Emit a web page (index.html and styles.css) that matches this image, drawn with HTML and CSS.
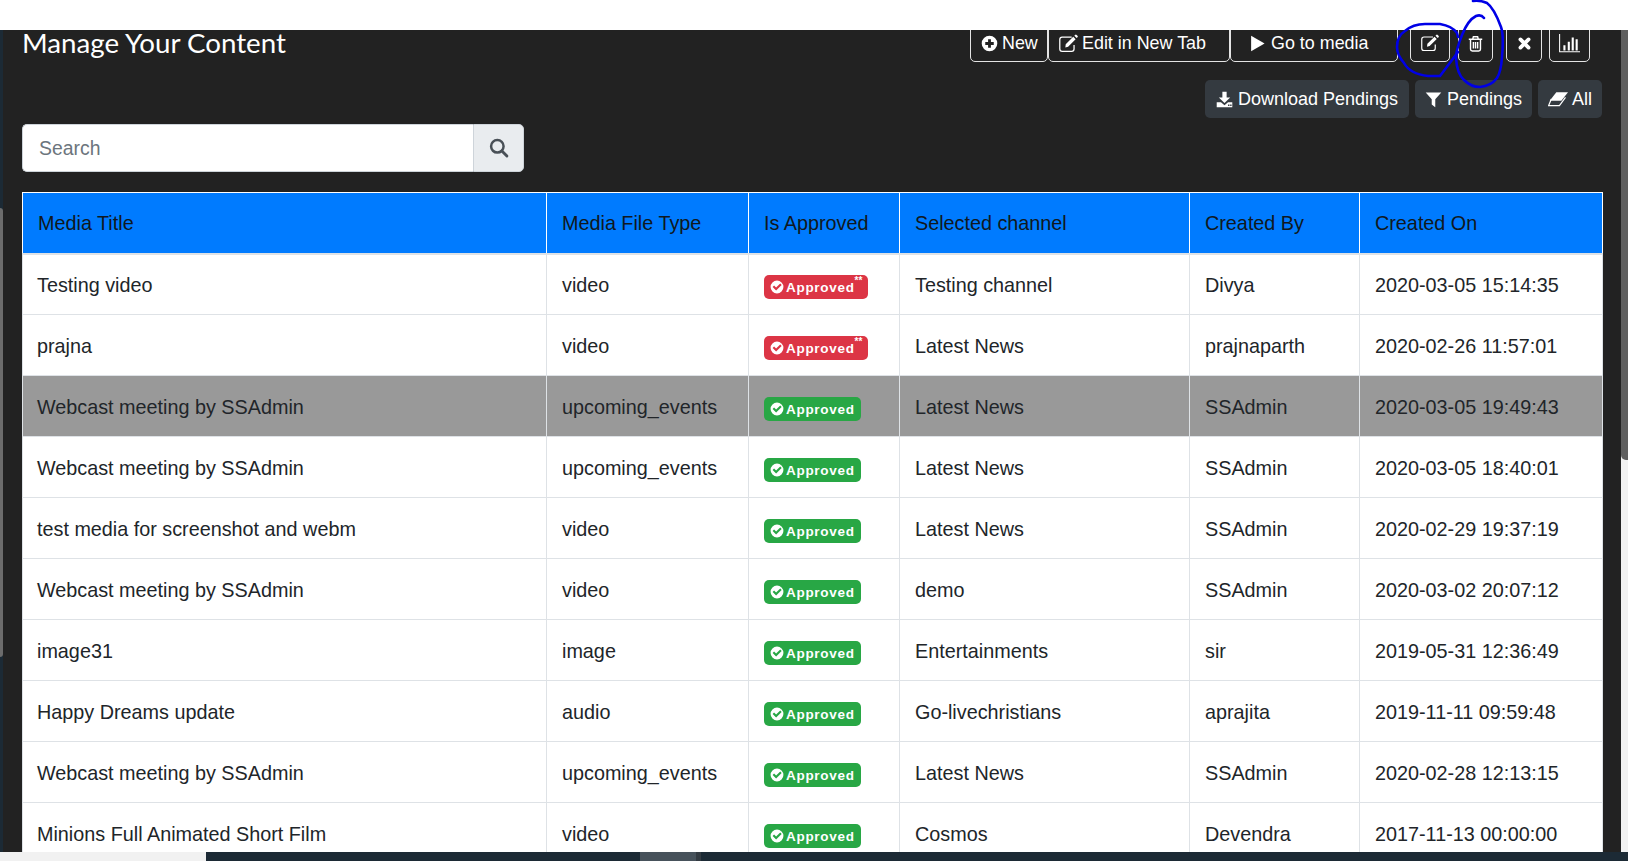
FILE: index.html
```html
<!DOCTYPE html>
<html lang="en">
<head>
<meta charset="utf-8">
<title>Manage Your Content</title>
<link rel="stylesheet" href="styles.css">
</head>
<body>
<svg class="defs" aria-hidden="true">
  <symbol id="i-plus" viewBox="0 0 24 24"><path fill="currentColor" fill-rule="evenodd" d="M12 1a11 11 0 1 0 0 22 11 11 0 0 0 0-22zM10 6h4v4h4v4h-4v4h-4v-4H6v-4h4z"/></symbol>
  <symbol id="i-edit" viewBox="0 0 24 24"><path fill="none" stroke="currentColor" stroke-width="1.600" d="M19 14v5a3 3 0 0 1-3 3H4a3 3 0 0 1-3-3V7a3 3 0 0 1 3-3h12"/><path fill="currentColor" d="M8.500 13 18 3.500l3 3L11.500 16 8 17zM19.300 2.200l1-1q1-1 2 0l1 1q1 1 0 2l-1 1z"/></symbol>
  <symbol id="i-play" viewBox="0 0 24 24"><path fill="currentColor" d="M3 1l19 11L3 23z"/></symbol>
  <symbol id="i-trash" viewBox="0 0 24 24"><path fill="none" stroke="currentColor" stroke-width="2" d="M2.500 6h19M8 6l1-3.500h6L16 6M5 6v14a2.500 2.500 0 0 0 2.500 2.500h9A2.500 2.500 0 0 0 19 20V6M9 10v9M12 10v9M15 10v9"/></symbol>
  <symbol id="i-times" viewBox="0 0 24 24"><path fill="none" stroke="currentColor" stroke-width="6" stroke-linecap="round" d="M5.500 5.500l13 13M18.500 5.500l-13 13"/></symbol>
  <symbol id="i-chart" viewBox="0 0 24 24"><path fill="none" stroke="currentColor" stroke-width="1.200" d="M.7 1v20.500H24"/><path fill="currentColor" d="M5 14h2.400v6H5zM10 10h2.400v10H10zM14.500 5h2.400v15h-2.400zM19 7h2.400v13H19z"/></symbol>
  <symbol id="i-download" viewBox="0 0 24 24"><path fill="currentColor" fill-rule="evenodd" d="M9 1h6v8h5l-8 8-8-8h5zM1 16h6l5 4 5-4h6v7H1zM17 19v2h2v-2zM20 19v2h2v-2z"/></symbol>
  <symbol id="i-filter" viewBox="0 0 24 24"><path fill="currentColor" d="M1 2h22l-8.500 9.500V23l-5-4v-7.500z"/></symbol>
  <symbol id="i-eraser" viewBox="0 0 24 24"><path fill="currentColor" d="M10 4h14l-8 10H2z"/><path fill="none" stroke="currentColor" stroke-width="1.400" d="M4 12l-3.300 8h13L21 10"/></symbol>
  <symbol id="i-search" viewBox="0 0 24 24"><circle cx="10" cy="10" r="7.500" fill="none" stroke="currentColor" stroke-width="3"/><path fill="none" stroke="currentColor" stroke-width="3.500" stroke-linecap="round" d="M15.500 15.500l6 6"/></symbol>
  <symbol id="i-check" viewBox="0 0 24 24"><path fill="currentColor" fill-rule="evenodd" d="M12 1a11 11 0 1 0 0 22 11 11 0 0 0 0-22zM10.500 18l-6-6 2.500-2.500 3.500 3.500 7-7 2.500 2.500z"/></symbol>
</svg>

<div class="topbar"></div>

<div class="window">
  <div class="edge"><div class="edge-thumb"></div></div>

  <main class="content">
    <header class="head">
      <h1 class="title">Manage Your Content</h1>
      <div class="actions">
        <div class="action-row outline-row">
          <a class="btn outline w-new"><svg class="ico"><use href="#i-plus"/></svg>New</a>
          <a class="btn outline w-edit"><svg class="ico ico-edit"><use href="#i-edit"/></svg>Edit in New Tab</a>
          <a class="btn outline w-go"><svg class="ico"><use href="#i-play"/></svg>Go to media</a>
          <a class="btn outline w-ic1 sp-a"><svg class="ico ico-edit"><use href="#i-edit"/></svg></a>
          <a class="btn outline w-ic2 sp-b"><svg class="ico"><use href="#i-trash"/></svg></a>
          <a class="btn outline w-ic3 sp-c"><svg class="ico ico-sm"><use href="#i-times"/></svg></a>
          <a class="btn outline w-ic4 sp-d"><svg class="ico"><use href="#i-chart"/></svg></a>
        </div>
        <div class="action-row solid-row">
          <a class="btn solid w-dl"><svg class="ico"><use href="#i-download"/></svg>Download Pendings</a>
          <a class="btn solid w-pend"><svg class="ico"><use href="#i-filter"/></svg>Pendings</a>
          <a class="btn solid w-all"><svg class="ico ico-eraser"><use href="#i-eraser"/></svg>All</a>
        </div>
      </div>
    </header>

    <form class="search">
      <input class="search-input" type="text" placeholder="Search">
      <span class="search-addon"><svg class="ico-search"><use href="#i-search"/></svg></span>
    </form>

    <table class="grid">
      <colgroup>
        <col class="c1"><col class="c2"><col class="c3"><col class="c4"><col class="c5"><col class="c6">
      </colgroup>
      <thead>
        <tr><th>Media Title</th><th>Media File Type</th><th>Is Approved</th><th>Selected channel</th><th>Created By</th><th>Created On</th></tr>
      </thead>
      <tbody>
        <tr><td>Testing video</td><td>video</td><td><span class="badge red"><svg class="ico-check"><use href="#i-check"/></svg>Approved<sup class="stars">**</sup></span></td><td>Testing channel</td><td>Divya</td><td>2020-03-05 15:14:35</td></tr>
        <tr><td>prajna</td><td>video</td><td><span class="badge red"><svg class="ico-check"><use href="#i-check"/></svg>Approved<sup class="stars">**</sup></span></td><td>Latest News</td><td>prajnaparth</td><td>2020-02-26 11:57:01</td></tr>
        <tr class="active"><td>Webcast meeting by SSAdmin</td><td>upcoming_events</td><td><span class="badge green"><svg class="ico-check"><use href="#i-check"/></svg>Approved</span></td><td>Latest News</td><td>SSAdmin</td><td>2020-03-05 19:49:43</td></tr>
        <tr><td>Webcast meeting by SSAdmin</td><td>upcoming_events</td><td><span class="badge green"><svg class="ico-check"><use href="#i-check"/></svg>Approved</span></td><td>Latest News</td><td>SSAdmin</td><td>2020-03-05 18:40:01</td></tr>
        <tr><td>test media for screenshot and webm</td><td>video</td><td><span class="badge green"><svg class="ico-check"><use href="#i-check"/></svg>Approved</span></td><td>Latest News</td><td>SSAdmin</td><td>2020-02-29 19:37:19</td></tr>
        <tr><td>Webcast meeting by SSAdmin</td><td>video</td><td><span class="badge green"><svg class="ico-check"><use href="#i-check"/></svg>Approved</span></td><td>demo</td><td>SSAdmin</td><td>2020-03-02 20:07:12</td></tr>
        <tr><td>image31</td><td>image</td><td><span class="badge green"><svg class="ico-check"><use href="#i-check"/></svg>Approved</span></td><td>Entertainments</td><td>sir</td><td>2019-05-31 12:36:49</td></tr>
        <tr><td>Happy Dreams update</td><td>audio</td><td><span class="badge green"><svg class="ico-check"><use href="#i-check"/></svg>Approved</span></td><td>Go-livechristians</td><td>aprajita</td><td>2019-11-11 09:59:48</td></tr>
        <tr><td>Webcast meeting by SSAdmin</td><td>upcoming_events</td><td><span class="badge green"><svg class="ico-check"><use href="#i-check"/></svg>Approved</span></td><td>Latest News</td><td>SSAdmin</td><td>2020-02-28 12:13:15</td></tr>
        <tr><td>Minions Full Animated Short Film</td><td>video</td><td><span class="badge green"><svg class="ico-check"><use href="#i-check"/></svg>Approved</span></td><td>Cosmos</td><td>Devendra</td><td>2017-11-13 00:00:00</td></tr>
      </tbody>
    </table>
  </main>

  <div class="vscroll"><div class="vscroll-thumb"></div></div>
</div>

<footer class="taskbar">
  <div class="hscroll-track"></div>
  <div class="task-left"></div>
  <div class="task-thumb"></div>
  <div class="task-thumb-end"></div>
  <div class="task-right"><span class="clock">10:22</span></div>
</footer>

<svg class="scribble" viewBox="0 0 1628 861" aria-hidden="true">
  <path d="M1458 52L1440 76L1428 76Q1410 74 1404 63Q1397 55 1397 47Q1397 36 1405 31Q1413 24 1425 24L1440 24Q1452 26 1457 33L1458 37"/>
  <path d="M1484 18Q1481 14 1476 16Q1468 20 1462 35Q1456 50 1456 58Q1457 74 1464 80Q1471 87 1480 87Q1491 86 1497 78Q1501 72 1502 57Q1504 35 1501 27Q1494 8 1487 3Q1480 0 1473 1"/>
</svg>
</body>
</html>
```

FILE: styles.css
```css
* { box-sizing: border-box; }

html, body {
  margin: 0;
  height: 100%;
  overflow: hidden;
}

body {
  display: flex;
  flex-direction: column;
  height: 861px;
  background: #222;
  font-family: "Liberation Sans", Arial, sans-serif;
  color: #212529;
}

.defs { display: none; }

.topbar {
  flex: 0 0 30px;
  background: #fff;
}

.window {
  flex: 1 1 auto;
  min-height: 0;
  display: flex;
  background: #222;
  overflow: hidden;
}

.edge {
  flex: 0 0 3px;
  background: #1c2a35;
  padding-top: 178px;
}

.edge-thumb {
  height: 449px;
  background: #6c6c6c;
  border-radius: 0 3px 3px 0;
}

.content {
  flex: 1 1 auto;
  min-width: 0;
  padding: 0 19px;
}

.vscroll {
  flex: 0 0 7px;
  background: #f1f1f1;
}

.vscroll-thumb {
  height: 430px;
  background: #5f5f5f;
  border-radius: 0 0 0 5px;
}

/* header */
.head {
  display: flex;
  justify-content: space-between;
  align-items: flex-start;
  margin-top: -6px;
}

.title {
  margin: 6px 0 0;
  font-family: Lato, "Noto Sans", sans-serif;
  font-size: 27.700px;
  font-weight: 400;
  line-height: 25px;
  color: #fff;
}

.actions {
  display: flex;
  flex-direction: column;
  align-items: flex-end;
  gap: 18px;
}

.action-row { display: flex; }

.outline-row { padding-right: 12px; }

.solid-row { gap: 6px; }

.btn {
  display: flex;
  align-items: center;
  justify-content: center;
  height: 38px;
  font-size: 17.900px;
  color: #fff;
  border-radius: 5px;
  white-space: nowrap;
}

.outline { border: 1px solid #e4e4e4; }
.solid { background: #343a40; font-size: 18px; }

.ico {
  width: 17px;
  height: 17px;
  margin-right: 5px;
  flex: none;
}

.ico-edit { width: 19px; height: 19px; }
.ico-eraser { width: 20px; height: 20px; margin-right: 4px; }

.w-ic1 .ico, .w-ic2 .ico, .w-ic3 .ico, .w-ic4 .ico { margin-right: 0; }
.w-ic1 .ico-edit { width: 18px; height: 18px; }
.w-ic3 .ico-sm { width: 15px; height: 15px; }
.w-ic4 .ico { width: 21px; height: 21px; }

.w-new { width: 78px; justify-content: flex-start; padding-left: 10px; }
.w-new .ico { margin-right: 4px; }
.w-edit { width: 182px; justify-content: flex-start; padding-left: 10px; }
.w-edit .ico { margin-right: 4px; }
.w-go { width: 168px; justify-content: flex-start; padding-left: 18px; }
.w-ic1 { width: 40px; }
.w-ic2 { width: 35px; }
.w-ic3 { width: 36px; }
.w-ic4 { width: 41px; }
.sp-a { margin-left: 12px; }
.sp-b { margin-left: 8px; }
.sp-c { margin-left: 13px; }
.sp-d { margin-left: 7px; }

.w-dl { width: 204px; }
.w-pend { width: 117px; }
.w-all { width: 64px; }

/* search */
.search {
  display: flex;
  width: 502px;
  height: 48px;
  margin-top: 6px;
}

.search-input {
  flex: 1 1 auto;
  min-width: 0;
  height: 100%;
  padding: 0 16px;
  border: 1px solid #ced4da;
  border-right: 0;
  border-radius: 5px 0 0 5px;
  background: #fff;
  font-family: inherit;
  font-size: 19.400px;
  color: #495057;
  outline: 0;
}

.search-input::placeholder { color: #6c757d; opacity: 1; }

.search-addon {
  flex: 0 0 51px;
  display: flex;
  align-items: center;
  justify-content: center;
  background: #e9ecef;
  border: 1px solid #ced4da;
  border-radius: 0 5px 5px 0;
  color: #495057;
}

.ico-search { width: 20px; height: 20px; }

/* table */
.grid {
  width: 1580px;
  margin-top: 20px;
  table-layout: fixed;
  border-collapse: collapse;
  background: #fff;
  font-size: 19.800px;
}

.c1 { width: 524px; }
.c2 { width: 202px; }
.c3 { width: 151px; }
.c4 { width: 290px; }
.c5 { width: 170px; }
.c6 { width: 243px; }

.grid th,
.grid td {
  height: 61px;
  padding: 2px 15px 0;
  text-align: left;
  font-weight: 400;
  white-space: nowrap;
  border: 1px solid #dee2e6;
}

.grid td:first-child { padding-left: 14px; }

.grid th {
  background: #007bff;
  color: #101820;
  border-color: #fff;
  border-bottom: 2px solid #dee2e6;
}

.grid .active td {
  background: #999;
}

/* badges */
.badge {
  display: inline-flex;
  align-items: center;
  height: 24px;
  margin-top: 4px;
  padding: 0 6px;
  border-radius: 5px;
  color: #fff;
  font-size: 13.500px;
  font-weight: 700;
  letter-spacing: .7px;
  vertical-align: middle;
}

.red { background: #dc3545; }
.green { background: #28a745; }

.ico-check {
  width: 14px;
  height: 14px;
  margin-right: 2px;
  flex: none;
}

.stars {
  align-self: flex-start;
  margin-top: 1px;
  font-size: 10px;
  line-height: 10px;
  letter-spacing: 0;
}

/* bottom strip */
.taskbar {
  flex: 0 0 9px;
  display: flex;
  overflow: hidden;
  background: #1c2a35;
}

.hscroll-track { flex: 0 0 206px; background: #f1f1f1; }
.task-left { flex: 0 0 434px; }
.task-thumb { flex: 0 0 56px; background: #47525b; }
.task-thumb-end { flex: 0 0 5px; background: #333b42; }
.task-right { flex: 1 1 auto; text-align: right; padding: 7px 88px 0 0; }

.clock {
  display: inline-block;
  color: #fff;
  font-size: 13px;
  line-height: 13px;
}

/* hand-drawn annotation over the page */
.scribble {
  position: absolute;
  left: 0;
  top: 0;
  width: 1628px;
  height: 861px;
  pointer-events: none;
}

.scribble path {
  fill: none;
  stroke: #0000e6;
  stroke-width: 2.600;
  stroke-linecap: round;
  stroke-linejoin: round;
}
```
